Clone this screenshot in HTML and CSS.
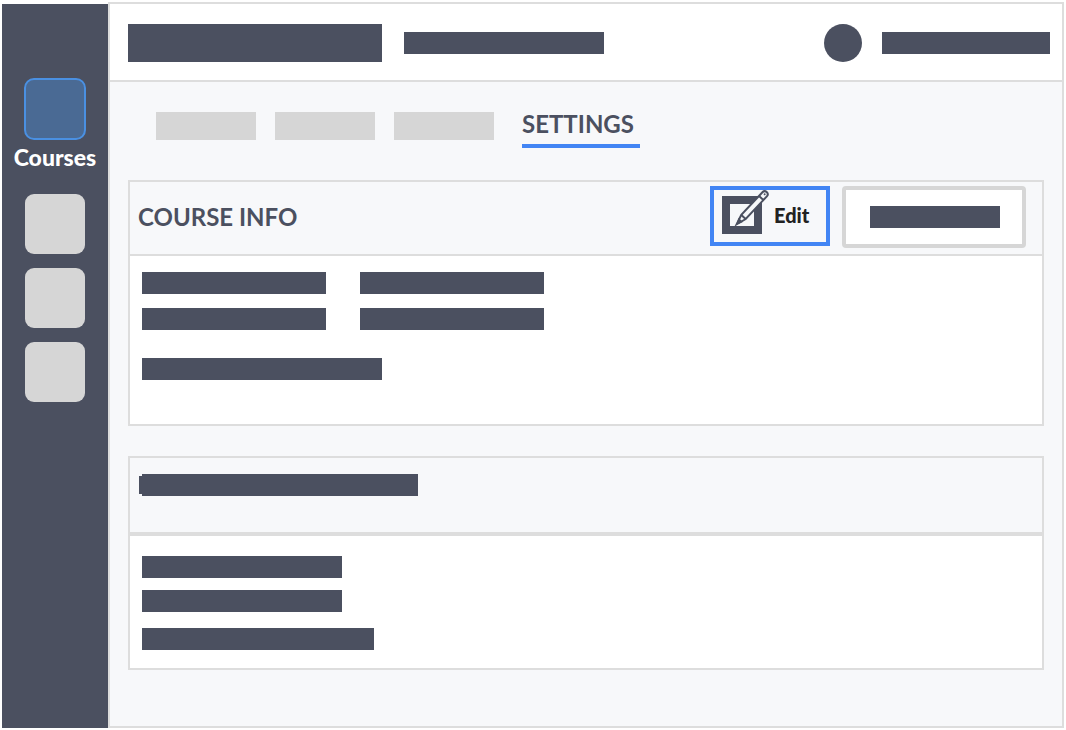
FILE: index.html
```html
<!DOCTYPE html>
<html lang="en">
<head>
<meta charset="utf-8">
<meta name="viewport" content="width=device-width, initial-scale=1">
<title>Course settings</title>
<link rel="stylesheet" href="styles.css">
</head>
<body>
<div class="app">
  <nav class="sidebar" aria-label="Primary">
    <a class="nav-current" href="#courses"><span class="nav-icon"></span>Courses</a>
    <a class="nav-tile" href="#one" aria-label="Section one"></a>
    <a class="nav-tile" href="#two" aria-label="Section two"></a>
    <a class="nav-tile" href="#three" aria-label="Section three"></a>
  </nav>
  <div class="main">
    <header class="topbar">
      <span class="logo"></span>
      <span class="bar w200"></span>
      <span class="avatar"></span>
      <span class="bar w168"></span>
    </header>
    <main class="content">
      <nav class="tabs" aria-label="Course">
        <a class="tab" href="#tab1" aria-label="Tab one"></a>
        <a class="tab" href="#tab2" aria-label="Tab two"></a>
        <a class="tab" href="#tab3" aria-label="Tab three"></a>
        <a class="tab-current" href="#settings" aria-current="page">SETTINGS</a>
      </nav>
      <section class="card">
        <div class="card-head">
          <h2 class="title">COURSE INFO</h2>
          <button class="edit" type="button">
            <svg class="edit-icon" width="40" height="38" viewBox="0 0 40 38" aria-hidden="true">
              <path class="frame" d="M0 0H40V38H0ZM8 8V30H32V8Z"/>
              <g transform="translate(14 29) rotate(-47)">
                <path class="pencil" d="M1 0L11 -3H42A3 3 0 0 1 42 3H11Z"/>
                <path class="line" d="M37 -3V3M11 -3V3"/>
                <path class="tip" d="M0 0L7 -3V3Z"/>
                <circle class="tip" cx="42" cy="0" r="1"/>
              </g>
            </svg>
            Edit
          </button>
          <button class="secondary" type="button" aria-label="More"><span class="bar w130"></span></button>
        </div>
        <div class="info">
          <div class="pair"><span class="bar w184"></span><span class="bar w184"></span></div>
          <div class="pair"><span class="bar w184"></span><span class="bar w184"></span></div>
          <span class="bar w240"></span>
        </div>
      </section>
      <section class="card">
        <div class="card-head plain"><span class="bar w276 notch"></span></div>
        <div class="details">
          <span class="bar w200"></span>
          <span class="bar w200"></span>
          <span class="bar w232"></span>
        </div>
      </section>
    </main>
  </div>
</div>
</body>
</html>
```
FILE: styles.css
```css
* { box-sizing: border-box; }

body {
  margin: 0;
  background: #fff;
  color: #4b5060;
  font-family: Lato, "Open Sans", sans-serif;
}

a { color: inherit; text-decoration: none; }

.app {
  display: flex;
  min-height: 100vh;
  padding: 2px;
}

.sidebar {
  display: flex;
  flex-direction: column;
  align-items: center;
  gap: 14px;
  flex: 0 0 106px;
  margin-top: 2px;
  padding-top: 74px;
  background: #4b5060;
}

.nav-current {
  display: flex;
  flex-direction: column;
  align-items: center;
  height: 102px;
  color: #fff;
  font-size: 23px;
  font-weight: 900;
  line-height: 34px;
}

.nav-icon {
  width: 62px;
  height: 62px;
  border: 2px solid #4a90e2;
  border-radius: 10px;
  background: #4a6a94;
}

.nav-tile {
  width: 60px;
  height: 60px;
  border-radius: 9px;
  background: #d6d6d6;
}

.main {
  display: flex;
  flex-direction: column;
  flex: 1;
  border: 2px solid #ddd;
  background: #f7f8fa;
}

.topbar {
  display: flex;
  align-items: center;
  height: 78px;
  padding: 2px 12px 0 18px;
  border-bottom: 2px solid #ddd;
  background: #fff;
}

.logo {
  width: 254px;
  height: 38px;
  margin-right: 22px;
  background: #4b5060;
}

.avatar {
  width: 38px;
  height: 38px;
  margin: 0 20px 0 auto;
  border-radius: 50%;
  background: #4b5060;
}

.bar {
  display: block;
  height: 22px;
  background: #4b5060;
}

.w130 { width: 130px; }
.w168 { width: 168px; }
.w184 { width: 184px; }
.w200 { width: 200px; }
.w232 { width: 232px; }
.w240 { width: 240px; }
.w276 { width: 276px; }

.content {
  display: flex;
  flex-direction: column;
  gap: 30px;
  padding: 28px 18px;
}

.tabs {
  display: flex;
  gap: 19px;
  height: 40px;
  padding: 2px 28px 0;
}

.tab {
  width: 100px;
  height: 28px;
  background: #d6d6d6;
}

.tab-current {
  width: 118px;
  height: 36px;
  margin-left: 9px;
  border-bottom: 4px solid #4285f4;
  font-size: 24px;
  font-weight: 700;
  line-height: 24px;
}

.card {
  border: 2px solid #ddd;
  background: #fff;
}

.card-head {
  display: flex;
  gap: 12px;
  height: 74px;
  padding: 4px 16px 0 8px;
  border-bottom: 2px solid #ddd;
  background: #f7f8fa;
}

.title {
  flex: 1;
  margin: 0;
  font-size: 24px;
  font-weight: 700;
  line-height: 62px;
}

.edit {
  display: flex;
  align-items: center;
  gap: 12px;
  width: 120px;
  height: 60px;
  padding: 0 0 2px 8px;
  border: 4px solid #4285f4;
  background: #f7f8fa;
  color: #222;
  font-family: inherit;
  font-size: 20px;
  font-weight: 900;
  line-height: 24px;
}

.edit-icon { overflow: visible; }
.frame { fill: #4b5060; fill-rule: evenodd; }
.pencil { fill: #f7f8fa; stroke: #4b5060; stroke-width: 2; }
.line { stroke: #4b5060; stroke-width: 2; }
.tip { fill: #4b5060; }

.secondary {
  display: flex;
  align-items: center;
  width: 184px;
  height: 62px;
  padding: 0 22px 0 24px;
  border: 4px solid #d6d6d6;
  border-radius: 4px;
  background: #fff;
}

.info {
  display: flex;
  flex-direction: column;
  gap: 14px;
  padding: 16px 12px 44px;
}

.info > .w240 { margin-top: 14px; }

.pair { display: flex; gap: 34px; }

.plain {
  height: 78px;
  padding: 16px 12px;
  border-bottom-width: 4px;
}

.notch { position: relative; }

.notch::before {
  content: "";
  position: absolute;
  top: 2px;
  left: -3px;
  width: 3px;
  height: 18px;
  background: #4b5060;
}

.details {
  display: flex;
  flex-direction: column;
  gap: 12px;
  padding: 20px 12px 18px;
}

.details > .w232 { margin-top: 4px; }
```
